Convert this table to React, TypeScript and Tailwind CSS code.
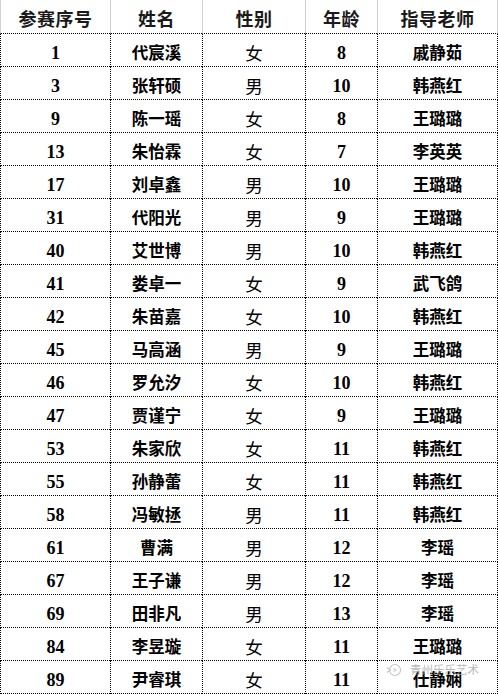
import React from "react";

const rows: [string, string, string, string, string][] = [
  ["1", "代宸溪", "女", "8", "戚静茹"],
  ["3", "张轩硕", "男", "10", "韩燕红"],
  ["9", "陈一瑶", "女", "8", "王璐璐"],
  ["13", "朱怡霖", "女", "7", "李英英"],
  ["17", "刘卓鑫", "男", "10", "王璐璐"],
  ["31", "代阳光", "男", "9", "王璐璐"],
  ["40", "艾世博", "男", "10", "韩燕红"],
  ["41", "娄卓一", "女", "9", "武飞鸽"],
  ["42", "朱苗嘉", "女", "10", "韩燕红"],
  ["45", "马高涵", "男", "9", "王璐璐"],
  ["46", "罗允汐", "女", "10", "韩燕红"],
  ["47", "贾谨宁", "女", "9", "王璐璐"],
  ["53", "朱家欣", "女", "11", "韩燕红"],
  ["55", "孙静蕾", "女", "11", "韩燕红"],
  ["58", "冯敏拯", "男", "11", "韩燕红"],
  ["61", "曹满", "男", "12", "李瑶"],
  ["67", "王子谦", "男", "12", "李瑶"],
  ["69", "田非凡", "男", "13", "李瑶"],
  ["84", "李昱璇", "女", "11", "王璐璐"],
  ["89", "尹睿琪", "女", "11", "仕静娴"],
];

const headers = ["参赛序号", "姓名", "性别", "年龄", "指导老师"];

const cjk = "font-['Noto_Sans_CJK_SC',sans-serif]";
const num = "font-['Liberation_Serif','Noto_Sans_CJK_SC',serif]";

function cellText(ci: number) {
  if (ci === 0 || ci === 3) return `${num} text-[18px] font-bold`;
  if (ci === 2) return `${cjk} text-[17.5px] font-normal`;
  return `${cjk} text-[16.5px] font-bold`;
}

export default function App() {
  return (
    <div className="relative w-[498px] h-[694px] bg-white overflow-hidden">
      <div className="grid grid-cols-[110px_92px_103px_72px_121px]">
        {headers.map((h, i) => (
          <div
            key={h}
            className={`h-[34px] flex items-center justify-center pt-[3px] border-b border-dotted border-black border-l border-l-[#d0d0d0] [border-left-style:solid] ${
              i === 4 ? "border-r border-r-[#d0d0d0] [border-right-style:solid]" : ""
            } ${cjk} font-bold text-[18px] leading-none text-[#1a1a1a] tracking-[0.5px]`}
          >
            {h}
          </div>
        ))}
        {rows.map((r, ri) =>
          r.map((c, ci) => (
            <div
              key={`${ri}-${ci}`}
              className={`h-[33px] flex items-center justify-center pt-[5px] border-b border-l border-dotted border-black ${
                ci === 4 ? "border-r" : ""
              } ${cellText(ci)} leading-none text-black`}
            >
              {c}
            </div>
          ))
        )}
      </div>
      <div className="absolute left-[386px] top-[663px] flex items-center gap-[8px] opacity-80 pointer-events-none">
        <svg width="16" height="14" viewBox="0 0 16 14" fill="none" stroke="#b8b8b8" strokeWidth="1.1">
          <circle cx="9" cy="7" r="5.5" />
          <path d="M1 4.5 L4.5 7 L1 9.5" />
          <path d="M7.5 5.5 L10 7 L7.5 8.5" />
        </svg>
        <span className={`${cjk} text-[11.5px] leading-none text-[#a8a8a8] whitespace-nowrap`}>青州乐乐艺术</span>
      </div>
    </div>
  );
}
